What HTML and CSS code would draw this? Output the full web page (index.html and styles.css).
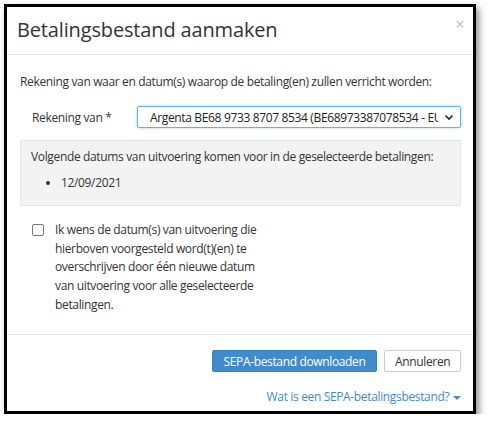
FILE: index.html
```html
<!DOCTYPE html>
<html lang="nl">
<head>
    <meta charset="UTF-8">
    <title>Betalingsbestand aanmaken</title>
    <link rel="stylesheet" href="styles.css">
</head>
<body>
    <div class="modal">
        <div class="modal-header">
            <h4 class="modal-title">Betalingsbestand aanmaken</h4>
            <span class="close">&times;</span>
        </div>

        <div class="modal-body">
            <p class="intro">Rekening van waar en datum(s) waarop de betaling(en) zullen verricht worden:</p>

            <div class="form-row">
                <label for="account">Rekening van *</label>
                <div class="select" id="account">
                    <span class="select-value">Argenta BE68 9733 8707 8534 (BE68973387078534 - EUR)</span>
                    <svg class="select-arrow" width="10" height="7" viewBox="0 0 10 7">
                        <path d="M1.5 1.5 L5 5 L8.5 1.5" fill="none" stroke="#222" stroke-width="1.6"/>
                    </svg>
                </div>
            </div>

            <div class="well">
                <p>Volgende datums van uitvoering komen voor in de geselecteerde betalingen:</p>
                <ul>
                    <li>12/09/2021</li>
                </ul>
            </div>

            <div class="check-row">
                <span class="checkbox"></span>
                <p>Ik wens de datum(s) van uitvoering die hierboven voorgesteld word(t)(en) te overschrijven door één nieuwe datum van uitvoering voor alle geselecteerde betalingen.</p>
            </div>
        </div>

        <div class="modal-footer">
            <div class="buttons">
                <button class="btn btn-primary">SEPA-bestand downloaden</button>
                <button class="btn btn-default">Annuleren</button>
            </div>
            <a class="help-link" href="#">Wat is een SEPA-betalingsbestand? <span class="caret"></span></a>
        </div>
    </div>
</body>
</html>
```

FILE: styles.css
```css
/* Basis */
body {
    margin: 0;
    padding: 0;
    background-color: #fff;
    color: #333;
    font-family: 'Open Sans', 'Liberation Sans', sans-serif;
    font-size: 12px;
    letter-spacing: -0.35px;
}
p {
    margin: 0;
}

/* Venster */
.modal {
    margin: 4px 0 0 4px;
    width: 466px;
    height: 404px;
    border: 3px solid #000;
    background-color: #fff;
    box-shadow: 3px 4px 7px rgba(0, 0, 0, 0.45);
    display: flex;
    flex-direction: column;
}
.modal-header {
    display: flex;
    justify-content: space-between;
    align-items: flex-start;
    height: 48px;
    padding: 0 9px 0 10px;
    border-bottom: 1px solid #e8e8e8;
    box-sizing: border-box;
}
.modal-title {
    margin: 9px 0 0 0;
    font-size: 20px;
    font-weight: normal;
    line-height: 28px;
    letter-spacing: -0.15px;
    color: #333;
}
.close {
    margin-top: 6px;
    font-size: 16px;
    color: #bbb;
}

/* Inhoud */
.modal-body {
    flex: 1;
    padding: 18px 12px 0 13px;
}
.intro {
    line-height: 18px;
}
.form-row {
    display: flex;
    align-items: center;
    margin-top: 15px;
}
.form-row label {
    width: 117px;
    padding-left: 12px;
    box-sizing: border-box;
}
.select {
    flex: 1;
    display: flex;
    align-items: center;
    height: 20px;
    padding: 0 6px 0 12px;
    border: 1px solid #66afe9;
    border-radius: 2px;
    box-shadow: 0 0 3px rgba(102, 175, 233, 0.6);
    overflow: hidden;
    color: #222;
    white-space: nowrap;
}
.select-value {
    flex: 1;
    overflow: hidden;
}
.select-arrow {
    margin-left: 6px;
}
.well {
    margin-top: 12px;
    padding: 7px 10px 10px 10px;
    background-color: #f3f3f3;
    border: 1px solid #e6e6e6;
    height: 47px;
}
.well p {
    line-height: 18px;
}
.well ul {
    margin: 8px 0 0 0;
    padding-left: 30px;
    line-height: 18px;
}
.check-row {
    display: flex;
    align-items: flex-start;
    margin-top: 15px;
    padding-left: 12px;
}
.checkbox {
    width: 10px;
    height: 10px;
    margin-top: 3px;
    border: 1px solid #777;
    border-radius: 2px;
    flex-shrink: 0;
}
.check-row p {
    width: 206px;
    margin-left: 11px;
    line-height: 18.7px;
}

/* Voettekst */
.modal-footer {
    border-top: 1px solid #e8e8e8;
    padding: 15px 12px 0 0;
    height: 77px;
    box-sizing: border-box;
    display: flex;
    flex-direction: column;
    align-items: flex-end;
}
.buttons {
    display: flex;
    gap: 7px;
}
.btn {
    font-family: inherit;
    font-size: 12px;
    letter-spacing: inherit;
    height: 22px;
    padding: 0 10px;
    border-radius: 2px;
    white-space: nowrap;
    cursor: pointer;
}
.btn-primary {
    background-color: #428bca;
    border: 1px solid #3a80bd;
    color: #fff;
    width: 165px;
}
.btn-default {
    background-color: #fff;
    border: 1px solid #ccc;
    color: #333;
    width: 77px;
}
.help-link {
    margin-top: 16px;
    color: #428bca;
    text-decoration: none;
}
.caret {
    display: inline-block;
    width: 0;
    height: 0;
    margin-left: 1px;
    border-top: 4px solid #428bca;
    border-left: 4px solid transparent;
    border-right: 4px solid transparent;
    vertical-align: middle;
}
```
